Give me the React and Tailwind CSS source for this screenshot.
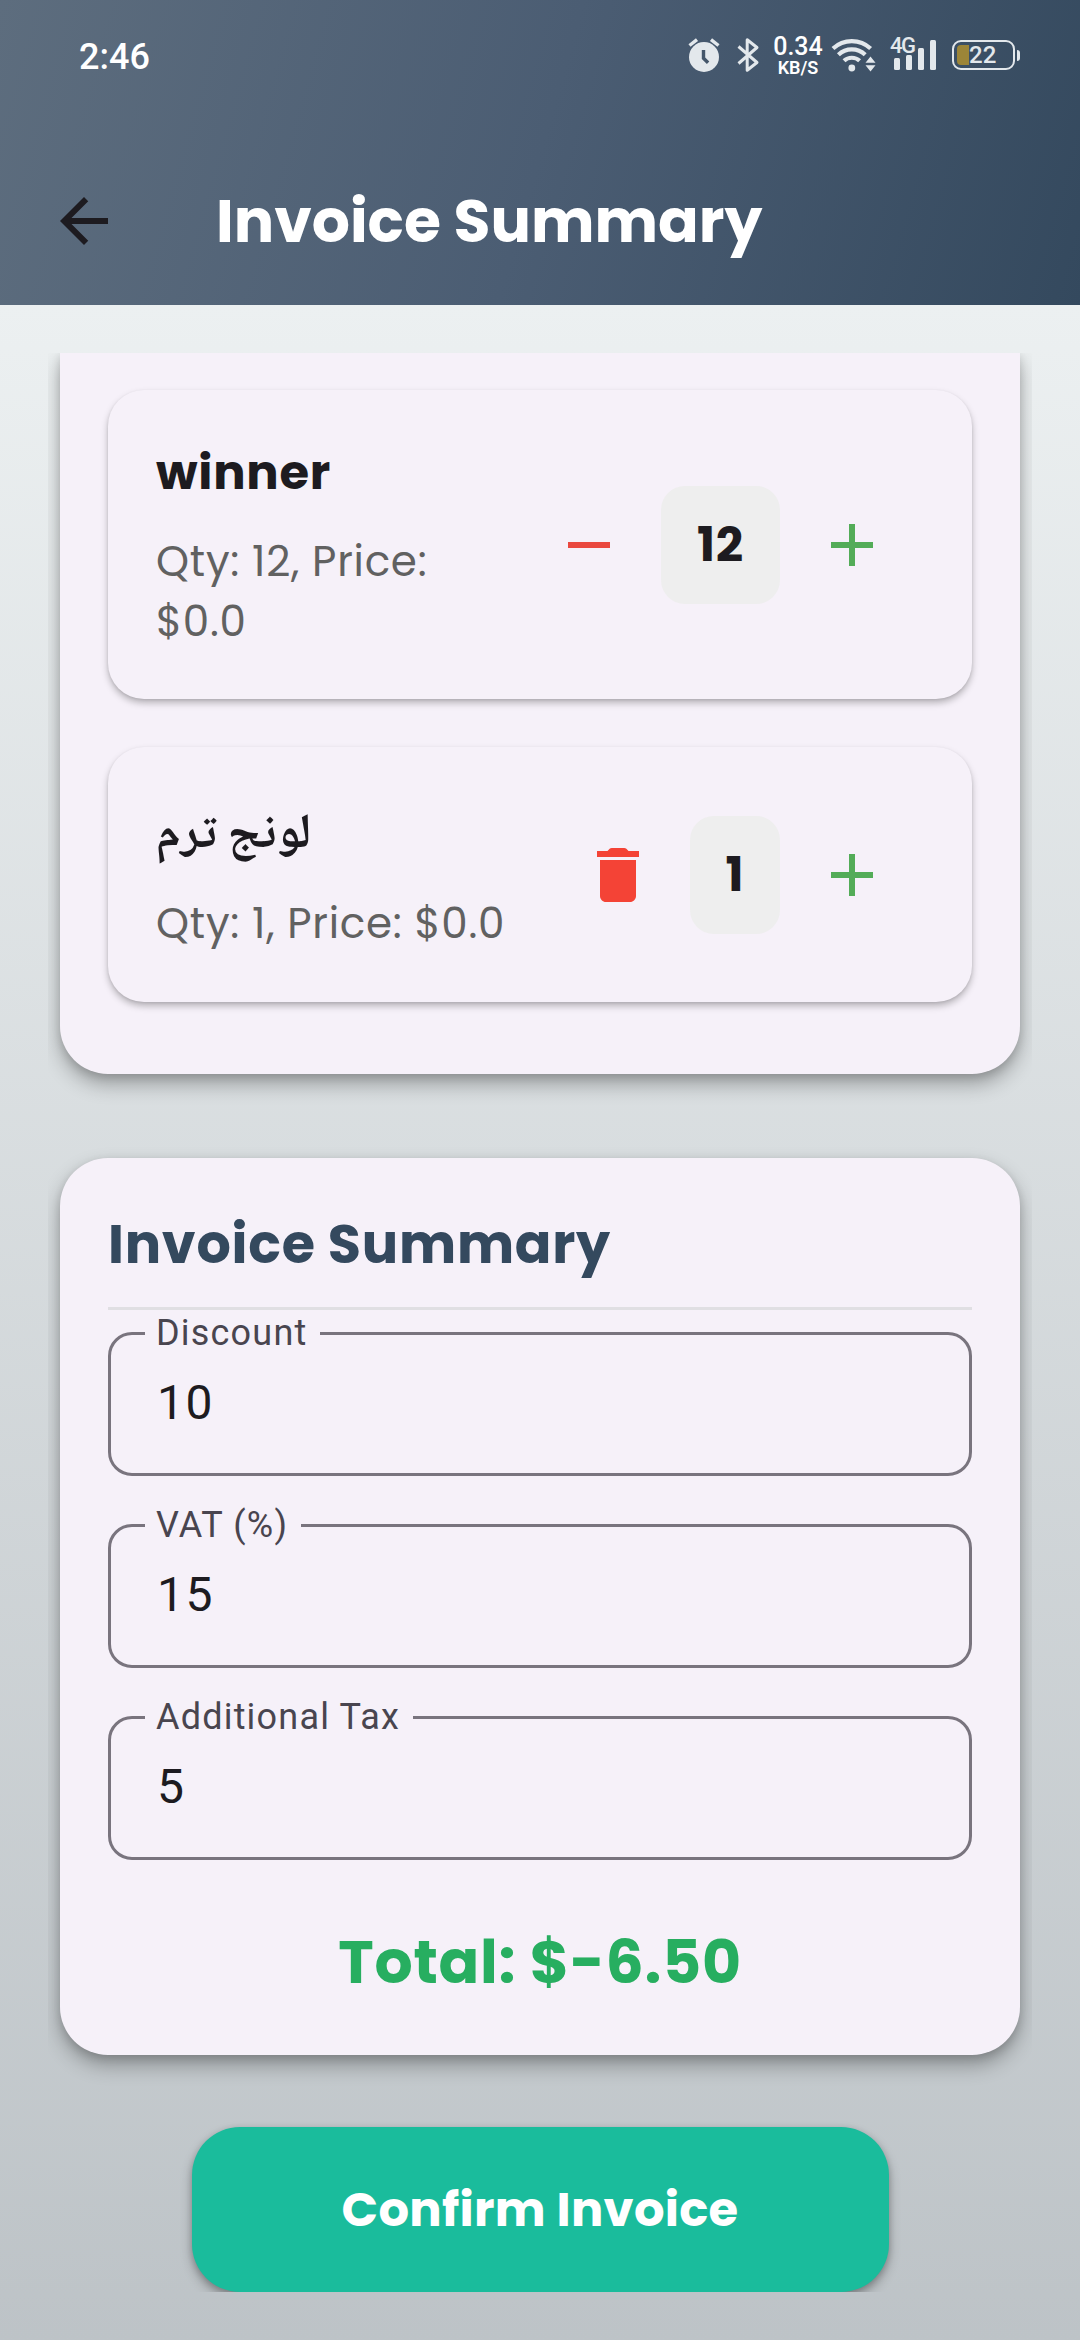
const display = "font-['Poppins','Inter',sans-serif]";

function StatusBar() {
  return (
    <div className="flex h-[110px] items-start pl-[79px] font-['Roboto',sans-serif] text-[#e3e8ec]">
      <span className="mt-[36px] w-[609px] text-[36px] leading-[42px] font-medium text-white">2:46</span>

      <svg className="mt-[38px] h-[34px] w-[32px] shrink-0" viewBox="0 0 32 34" fill="none">
        <circle cx="16" cy="19" r="15" fill="#e3e8ec" />
        <path d="M1.5 7.5 9 1.6M30.5 7.5 23 1.6" stroke="#e3e8ec" strokeWidth="3.4" />
        <path d="M15.5 12v8.2l4.6 4.6" stroke="#44566a" strokeWidth="3.4" />
      </svg>

      <svg className="mt-[37px] ml-[17px] h-[36px] w-[23px] shrink-0" viewBox="0 0 23 36" fill="none" stroke="#e3e8ec" strokeWidth="3">
        <path d="M1.5 9.5 20 25.5 10.2 33.2V2.8L20 10.5 1.5 26.5" strokeLinejoin="round" />
      </svg>

      <div className="mt-[34px] ml-[11px] flex w-[54px] flex-col items-center text-white">
        <span className="text-[25px] leading-[25px] font-medium">0.34</span>
        <span className="text-[18px] leading-[17px] font-semibold">KB/S</span>
      </div>

      <svg className="mt-[37px] ml-[6px] h-[35px] w-[46px] shrink-0" viewBox="0 0 46 35" fill="none" stroke="#e3e8ec" strokeWidth="4.2">
        <path d="M2 11.5a27.5 27.5 0 0 1 37.600 0" />
        <path d="M7.400 17.800a19.500 19.500 0 0 1 26.800 0" />
        <path d="M13 23.800a11.500 11.500 0 0 1 15.600 0" />
        <circle cx="20.800" cy="31" r="3.400" fill="#e3e8ec" stroke="none" />
        <path d="M39.500 19.500l5 6.300h-10zM39.500 34.500l5-6.300h-10z" fill="#e3e8ec" stroke="none" />
      </svg>

      <div className="relative ml-[14px] h-[74px] w-[46px] shrink-0">
        <span className="absolute top-[34px] -left-[1px] text-[22px] leading-[24px] font-medium tracking-[-1.5px]">4G</span>
        <div className="flex h-[70px] items-end gap-[6px] pl-[3px]">
          <i className="h-[12px] w-[6px] rounded-[1.5px] bg-[#e3e8ec]" />
          <i className="h-[15px] w-[6px] rounded-[1.5px] bg-[#e3e8ec]" />
          <i className="h-[22px] w-[6px] rounded-[1.5px] bg-[#e3e8ec]" />
          <i className="h-[30px] w-[6px] rounded-[1.5px] bg-[#e3e8ec]" />
        </div>
      </div>

      <div className="mt-[40px] ml-[15px] flex items-center gap-[2px]">
        <div className="flex h-[30px] w-[63px] items-center rounded-[9px] border-2 border-[#e3e8ec] pl-[3px]">
          <i className="h-[20px] w-[12px] rounded-l-[4px] bg-[#9c8538]" />
          <span className="text-[24px] leading-[26px] font-medium">22</span>
        </div>
        <i className="h-[11px] w-[3px] rounded-r-sm bg-[#e3e8ec]" />
      </div>
    </div>
  );
}

function AppBar() {
  return (
    <header className="h-[305px] bg-[linear-gradient(105.8deg,#5d6d7e,#4b5d73_50%,#34495e)]">
      <StatusBar />
      <div className="flex h-[195px] items-start">
        <svg className="mt-[75px] ml-[48px] size-[72px]" viewBox="0 0 24 24" fill="#1d1b20">
          <path d="M20 11H7.830l5.590-5.590L12 4l-8 8 8 8 1.410-1.410L7.830 13H20z" />
        </svg>
        <h1 className={`mt-[71px] ml-[96px] text-[60px] leading-[80px] font-bold whitespace-nowrap text-white ${display}`}>
          Invoice Summary
        </h1>
      </div>
    </header>
  );
}

function IconButton({ children }) {
  return <button className="flex h-[144px] w-[144px] shrink-0 items-center justify-center">{children}</button>;
}

const Minus = () => (
  <svg className="size-[72px]" viewBox="0 0 24 24" fill="#ea483f">
    <path d="M19 13H5v-2h14z" />
  </svg>
);

const Plus = () => (
  <svg className="size-[72px]" viewBox="0 0 24 24" fill="#53ac58">
    <path d="M19 13h-6v6h-2v-6H5v-2h6V5h2v6h6z" />
  </svg>
);

const Trash = () => (
  <svg className="size-[72px]" viewBox="0 0 24 24" fill="#f44336">
    <path d="M6 19c0 1.100.900 2 2 2h8c1.100 0 2-.900 2-2V7H6zM19 4h-3.500l-.710-.710c-.180-.180-.440-.290-.700-.290H9.910c-.260 0-.520.110-.700.290L8.500 4H5v2h14z" />
  </svg>
);

function Item({ className, title, children, lead, qty }) {
  return (
    <div className={`flex items-center rounded-[36px] bg-[#f6f1f9] px-[48px] shadow-[0_4px_7px_rgba(0,0,0,0.26),0_1px_3px_rgba(0,0,0,0.08)] ${className}`}>
      <div className="min-w-0 flex-1">
        {title}
        {children}
      </div>
      <IconButton>{lead}</IconButton>
      <span className={`flex h-[118px] shrink-0 items-center justify-center rounded-[24px] bg-[#eeeeee] text-[48px] font-bold tracking-[0.75px] text-[#1d1b20] ${qty > 9 ? "w-[119px]" : "w-[90px]"} ${display}`}>
        {qty}
      </span>
      <IconButton>
        <Plus />
      </IconButton>
    </div>
  );
}

function Field({ label, value }) {
  return (
    <div className="relative h-[144px] rounded-[24px] border-3 border-[#79747e] pt-[42px] pl-[46px] font-['Roboto',sans-serif]">
      <label className="absolute -top-[23px] left-[34px] bg-[#f6f1f9] pr-[13px] pl-[11px] text-[36px] leading-[42px] tracking-[1.2px] text-[#49454f]">{label}</label>
      <div className="text-[48px] leading-[52px] tracking-[1.5px] text-[#1d1b20]">{value}</div>
    </div>
  );
}

const cardShadow = "shadow-[0_10px_20px_rgba(0,0,0,0.3),0_3px_9px_rgba(0,0,0,0.12)]";
const subtitle = `text-[42px] leading-[60px] tracking-[0.75px] text-[#616161] ${display}`;

export default function App() {
  return (
    <div className="h-[2340px] w-[1080px] overflow-hidden bg-[#bdc3c7]">
      <AppBar />
      <div className="h-[2035px] bg-linear-to-b from-[#ecf0f1] to-[#bdc3c7] px-[48px] pt-[48px]">
        <main className="flex h-[1939px] flex-col justify-end overflow-hidden px-[12px]">
          <section className={`shrink-0 rounded-b-[48px] bg-[#f6f1f9] px-[48px] pt-[37px] pb-[72px] ${cardShadow}`}>
            <Item
              className="h-[309px]"
              qty={12}
              lead={<Minus />}
              title={<h3 className={`text-[48px] leading-[72px] font-bold tracking-[0.75px] text-[#1d1b20] ${display}`}>winner</h3>}
            >
              <p className={`mt-[23px] pb-px ${subtitle}`}>
                Qty: 12, Price:
                <br />
                $0.0
              </p>
            </Item>
            <Item
              className="mt-[48px] h-[255px]"
              qty={1}
              lead={<Trash />}
              title={<h3 className="font-['Noto_Naskh_Arabic','Noto_Sans',serif] text-[49px] leading-[84px] font-bold text-[#1d1b20]">لونج ترم</h3>}
            >
              <p className={`mt-[15px] whitespace-nowrap ${subtitle}`}>Qty: 1, Price: $0.0</p>
            </Item>
          </section>

          <section className={`mt-[84px] h-[897px] shrink-0 rounded-[48px] bg-[#f6f1f9] px-[48px] pt-[46px] ${cardShadow}`}>
            <h2 className={`text-[54px] leading-[80px] font-bold tracking-[0.75px] text-[#34495e] ${display}`}>Invoice Summary</h2>
            <hr className="mt-[23px] border-t-3 border-[#e0dfe3]" />
            <div className="mt-[22px] flex flex-col gap-[48px]">
              <Field label="Discount" value="10" />
              <Field label="VAT (%)" value="15" />
              <Field label="Additional Tax" value="5" />
            </div>
            <p className={`mt-[62px] text-center text-[60px] leading-[80px] font-bold tracking-[0.75px] text-[#27ae60] ${display}`}>
              Total: $-6.50
            </p>
          </section>

          <button className={`mt-[72px] flex h-[165px] w-[697px] shrink-0 items-center justify-center self-center rounded-[48px] bg-[#1abc9c] text-[48px] font-bold tracking-[0.3px] text-white shadow-[0_6px_12px_rgba(0,0,0,0.28),0_2px_6px_rgba(0,0,0,0.16)] ${display}`}>
            Confirm Invoice
          </button>
        </main>
      </div>
    </div>
  );
}
